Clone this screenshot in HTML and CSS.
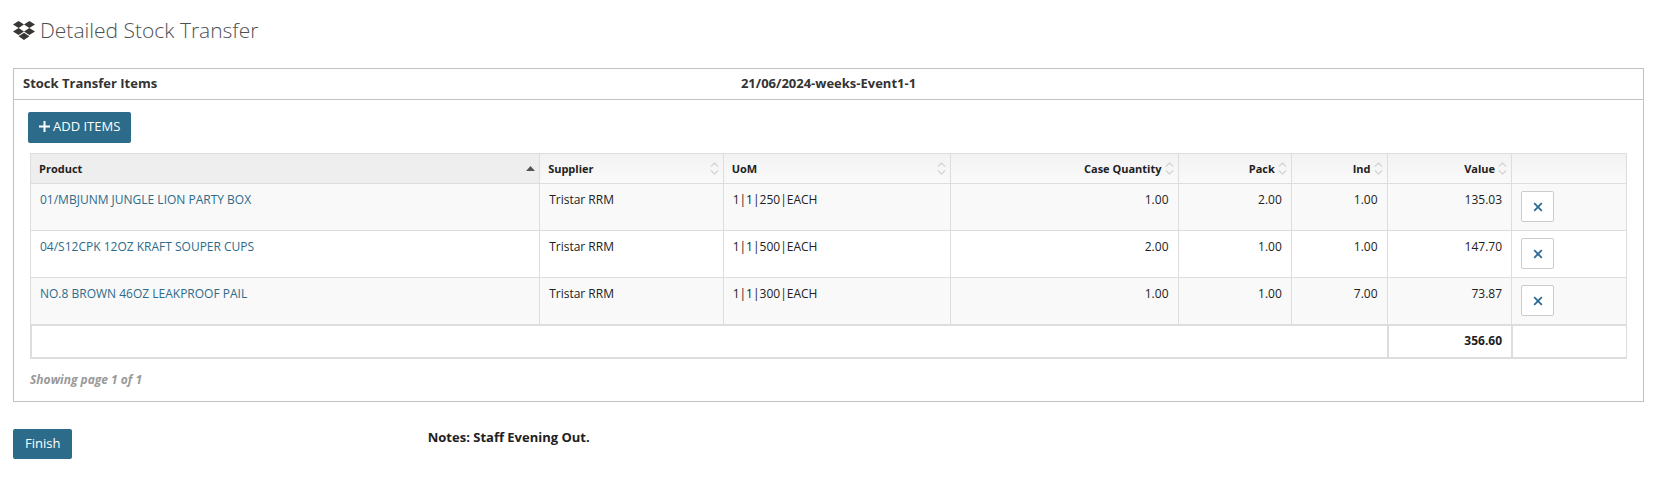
FILE: index.html
```
<!DOCTYPE html>
<html lang="en">
<head>
  <meta charset="UTF-8">
  <meta name="viewport" content="width=device-width, initial-scale=1.0">
  <title>Detailed Stock Transfer</title>
  <link rel="stylesheet" href="styles.css">
</head>
<body>
  <svg class="sprite" aria-hidden="true">
    <symbol id="sort" viewBox="0 0 9 13">
      <path d="M0.8 4.6L4.5 1L8.2 4.6M0.8 8.4L4.5 12L8.2 8.4" fill="none" stroke="#d4d4d4" stroke-width="1.3"/>
    </symbol>
    <symbol id="times" viewBox="0 0 10 10">
      <path d="M1.2 1.2L8.8 8.8M8.8 1.2L1.2 8.8" fill="none" stroke="#2c6b94" stroke-width="1.8"/>
    </symbol>
  </svg>

  <h1 class="page-title">
    <svg class="title-icon" viewBox="0 0 22 19" aria-hidden="true">
      <path d="M5.6 0L11 3.5L5.6 7L0 3.5ZM16.4 0L22 3.5L16.4 7L11 3.5ZM5.6 7L11 10.5L5.6 14L0 10.5ZM16.4 7L22 10.5L16.4 14L11 10.5ZM11 11.8L16.4 15.3L11 19L5.6 15.3Z" fill="#3a3633"/>
    </svg>
    <span>Detailed Stock Transfer</span>
  </h1>

  <section class="widget">
    <header class="widget-header">
      <h2>Stock Transfer Items</h2>
      <h2>21/06/2024-weeks-Event1-1</h2>
    </header>

    <div class="widget-body">
      <button type="button" class="btn btn-add">
        <svg class="plus" viewBox="0 0 11 11" aria-hidden="true"><path d="M5.5 0V11M0 5.5H11" stroke="#fff" stroke-width="2"/></svg>
        <span>ADD ITEMS</span>
      </button>

      <table class="items">
        <colgroup>
          <col class="c-product">
          <col class="c-supplier">
          <col class="c-uom">
          <col class="c-case">
          <col class="c-pack">
          <col class="c-ind">
          <col class="c-value">
          <col class="c-action">
        </colgroup>
        <thead>
          <tr>
            <th class="sorted"><div class="head"><span>Product</span><svg class="asc" viewBox="0 0 9 5" aria-hidden="true"><path d="M0 5L4.5 0L9 5Z" fill="#555"/></svg></div></th>
            <th><div class="head"><span>Supplier</span><svg class="sort"><use href="#sort"/></svg></div></th>
            <th><div class="head"><span>UoM</span><svg class="sort"><use href="#sort"/></svg></div></th>
            <th><div class="head head-num"><span>Case Quantity</span><svg class="sort"><use href="#sort"/></svg></div></th>
            <th><div class="head head-num"><span>Pack</span><svg class="sort"><use href="#sort"/></svg></div></th>
            <th><div class="head head-num"><span>Ind</span><svg class="sort"><use href="#sort"/></svg></div></th>
            <th><div class="head head-num"><span>Value</span><svg class="sort"><use href="#sort"/></svg></div></th>
            <th></th>
          </tr>
        </thead>
        <tbody>
          <tr>
            <td><a href="#">01/MBJUNM JUNGLE LION PARTY BOX</a></td>
            <td>Tristar RRM</td>
            <td>1|1|250|EACH</td>
            <td class="num">1.00</td>
            <td class="num">2.00</td>
            <td class="num">1.00</td>
            <td class="num">135.03</td>
            <td><button type="button" class="btn-remove" aria-label="Remove"><svg class="times"><use href="#times"/></svg></button></td>
          </tr>
          <tr>
            <td><a href="#">04/S12CPK 12OZ KRAFT SOUPER CUPS</a></td>
            <td>Tristar RRM</td>
            <td>1|1|500|EACH</td>
            <td class="num">2.00</td>
            <td class="num">1.00</td>
            <td class="num">1.00</td>
            <td class="num">147.70</td>
            <td><button type="button" class="btn-remove" aria-label="Remove"><svg class="times"><use href="#times"/></svg></button></td>
          </tr>
          <tr>
            <td><a href="#">NO.8 BROWN 46OZ LEAKPROOF PAIL</a></td>
            <td>Tristar RRM</td>
            <td>1|1|300|EACH</td>
            <td class="num">1.00</td>
            <td class="num">1.00</td>
            <td class="num">7.00</td>
            <td class="num">73.87</td>
            <td><button type="button" class="btn-remove" aria-label="Remove"><svg class="times"><use href="#times"/></svg></button></td>
          </tr>
        </tbody>
        <tfoot>
          <tr>
            <td colspan="6"></td>
            <td class="num">356.60</td>
            <td></td>
          </tr>
        </tfoot>
      </table>

      <p class="page-info">Showing page 1 of 1</p>
    </div>
  </section>

  <footer class="actions">
    <div><button type="button" class="btn">Finish</button></div>
    <p class="notes">Notes: Staff Evening Out.</p>
  </footer>
</body>
</html>
```
FILE: styles.css
```
* {
  box-sizing: border-box;
}
body {
  margin: 0;
  padding: 13px 9px 16px 13px;
  background: #fff;
  color: #212121;
  font-family: "Open Sans", Arial, Helvetica, sans-serif;
  font-size: 13px;
  line-height: 18px;
}
.sprite {
  display: none;
}
.page-title {
  display: flex;
  align-items: center;
  gap: 5px;
  margin: 0 0 21px;
  color: #4d5053;
  font-size: 21px;
  font-weight: 300;
  line-height: 34px;
}
.title-icon {
  width: 22px;
  height: 19px;
}

.widget {
  border: 1px solid #c2c2c2;
}
.widget-header {
  display: grid;
  grid-template-columns: 1fr auto 1fr;
  padding: 0 9px 2px;
  border-bottom: 1px solid #c2c2c2;
}
.widget-header h2 {
  margin: 0;
  color: #333;
  font-size: 13px;
  font-weight: 700;
  line-height: 28px;
}
.widget-body {
  padding: 12px 16px;
}

.btn {
  display: inline-flex;
  align-items: center;
  gap: 3px;
  height: 30px;
  padding: 0 12px 2px;
  border: 0;
  border-radius: 2px;
  background: #2c6b8a;
  color: #fff;
  font: inherit;
}
.btn-add {
  display: flex;
  height: 31px;
  margin: 0 0 10px -2px;
  padding: 0 11px 3px;
}
.plus {
  width: 11px;
  height: 11px;
}

.items {
  width: 100%;
  table-layout: fixed;
  border-collapse: separate;
  border-spacing: 0;
  border-top: 1px solid #ddd;
  border-left: 1px solid #ddd;
  font-size: 12px;
}
.c-product { width: 31.9%; }
.c-supplier { width: 11.5%; }
.c-uom { width: 14.25%; }
.c-case { width: 14.25%; }
.c-pack { width: 7.1%; }
.c-ind { width: 6%; }
.c-value { width: 7.8%; }
.c-action { width: 7.2%; }

.items th,
.items td {
  border-right: 1px solid #ddd;
  border-bottom: 1px solid #ddd;
  text-align: left;
  vertical-align: top;
}
.items th {
  height: 30px;
  padding: 0 4px 0 8px;
  background: linear-gradient(#f2f2f2, #fafafa);
  font-size: 11px;
  font-weight: 700;
}
.items th.sorted {
  background: #eee;
}
.head {
  display: flex;
  align-items: center;
  justify-content: space-between;
  gap: 3px;
  line-height: 29px;
}
.head-num {
  justify-content: flex-end;
}
.sort {
  width: 9px;
  height: 13px;
}
.asc {
  width: 9px;
  height: 5px;
}
.items td {
  height: 47px;
  padding: 7px 9px;
}
.items tbody tr:nth-child(odd) {
  background: #f9f9f9;
}
.items td.num {
  text-align: right;
}
.items a {
  color: #2c6b8a;
  text-decoration: none;
}
.btn-remove {
  display: flex;
  align-items: center;
  justify-content: center;
  width: 33px;
  height: 31px;
  padding: 0;
  border: 1px solid #ccc;
  border-radius: 2px;
  background: #fff;
}
.times {
  width: 10px;
  height: 10px;
}
.items tfoot td {
  height: 34px;
  padding: 6px 9px;
  border-top: 1px solid #ddd;
  border-bottom-width: 2px;
  border-left: 1px solid #ddd;
  font-weight: 700;
}

.page-info {
  margin: 12px 0 0;
  color: #999;
  font-size: 12px;
  font-style: italic;
  font-weight: 700;
}

.actions {
  display: grid;
  grid-template-columns: 1fr 3fr;
  margin-top: 27px;
}
.notes {
  margin: 0;
  padding-left: 7px;
  font-weight: 700;
  line-height: 16px;
}
```
